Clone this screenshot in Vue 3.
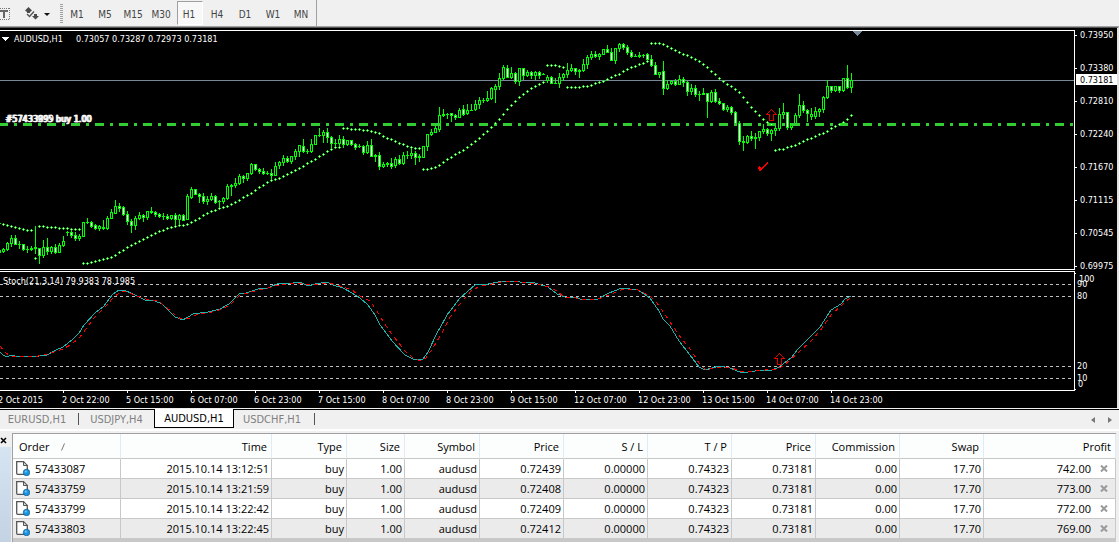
<script setup>
const STEP = 4
const timeframes = ['M1', 'M5', 'M15', 'M30', 'H1', 'H4', 'D1', 'W1', 'MN']
const activeFrame = 'H1'

// Each bar: high, low, body top, body bottom, and 1 when the close is below the open.
const bars = `249 253 250 252 0;248 252 249 251 0;242 250 243 249 0;235 246 238 243 0;235 244 238 244 1;241 248 244 244 0;244 250 244 249 1;246 252 249 249 0;246 250 248 249 0;226 253 247 248 0;248 263 248 255 1
240 257 247 255 0;238 254 247 251 1;246 253 247 251 0;244 253 247 252 1;243 252 245 252 0;236 246 241 245 0;231 235 232 232 0;230 237 232 235 1;232 240 235 238 1;234 240 236 238 0
222 236 222 236 0;218 223 222 222 0;221 227 222 226 1;224 229 225 228 1;225 230 226 228 0;220 229 227 228 0;216 229 218 228 0;209 218 212 218 0;200 213 206 213 0;203 211 206 208 1
206 215 207 214 1;211 224 214 221 1;219 232 221 225 1;216 229 218 225 0;212 219 215 218 0;214 221 215 217 1;211 219 211 217 0;207 213 211 212 0;211 216 212 214 1;213 217 214 216 1
213 219 216 216 0;214 219 216 218 1;215 219 215 218 0;213 225 215 219 1;214 224 215 219 0;214 220 215 220 1;194 219 196 219 0;187 198 189 197 0;189 194 189 194 1;193 202 194 196 1
193 203 196 201 1;196 204 199 201 0;193 200 196 199 0;195 203 196 202 1;200 208 201 201 0;197 203 198 201 0;184 199 186 198 0;184 195 185 186 0;178 187 183 185 0;174 184 176 183 0
175 182 176 178 1;173 180 173 178 0;163 174 164 173 0;164 170 164 169 1;168 173 169 171 1;168 174 171 173 1;171 174 173 173 0;169 179 173 175 1;162 175 166 175 0;161 168 162 165 0
155 165 158 162 0;156 162 158 161 1;156 163 156 161 0;149 159 151 156 0;145 156 145 151 0;139 152 146 151 1;149 153 151 151 0;139 152 144 151 0;135 144 135 144 0;128 136 135 135 0
130 142 132 135 0;128 142 132 137 1;136 149 137 143 1;139 146 143 143 0;135 145 139 143 0;136 147 139 144 1;140 145 140 144 0;140 145 140 144 1;143 149 144 147 1;144 147 146 146 0
145 154 146 152 1;141 153 145 152 0;139 156 145 156 1;154 161 155 156 0;152 169 155 166 1;162 167 164 166 0;162 166 163 164 0;158 168 163 166 1;157 167 159 165 0;155 164 159 163 1
152 164 155 163 0;151 158 155 155 0;147 158 153 155 0;151 164 153 157 1;154 161 156 157 0;146 157 146 157 0;134 150 134 146 0;129 135 132 134 0;124 132 128 132 0;107 131 115 129 0
109 116 114 115 0;113 118 114 114 0;113 121 113 115 1;114 119 115 117 1;108 117 110 117 0;105 115 109 114 1;104 114 110 113 0;104 110 110 110 0;100 110 104 109 0;97 108 100 104 0
98 102 100 100 0;91 101 98 100 0;87 99 88 98 0;84 102 86 89 0;73 89 78 86 0;65 79 67 78 0;65 77 68 77 1;67 78 73 77 0;72 83 73 81 1;68 85 68 81 0
68 79 68 75 1;70 76 72 75 0;71 78 72 75 1;71 79 72 75 0;71 78 72 75 1;73 74 74 74 0;75 82 77 80 0;76 83 77 83 1;78 83 83 83 0;73 87 77 83 0
73 80 74 77 0;63 77 70 74 0;64 71 68 70 0;68 74 68 71 1;69 77 70 71 0;59 71 64 70 0;55 68 57 64 0;51 59 54 57 0;51 57 54 56 1;53 59 54 56 0
49 54 49 54 0;45 52 49 52 1;48 60 52 60 1;48 63 48 60 0;43 51 44 48 0;43 49 44 47 1;45 54 47 52 1;50 57 52 56 1;54 56 56 56 0;52 57 55 56 0
54 57 55 55 0;53 62 54 59 1;55 66 59 65 1;62 74 65 74 1;72 77 72 74 0;61 94 71 88 1;80 89 84 88 0;80 84 81 83 0;79 85 81 84 1;75 84 79 84 0
77 86 79 82 1;81 95 82 91 1;84 94 88 91 0;85 96 88 94 1;91 100 94 94 0;88 94 93 94 0;93 117 93 101 1;90 102 92 101 0;89 102 92 101 1;98 104 101 103 1
103 110 103 109 1;105 111 107 109 0;106 114 107 112 1;111 123 112 123 1;121 144 123 141 1;136 150 141 142 0;135 143 136 142 0;131 140 136 138 1;133 148 137 138 0;131 140 131 137 0
124 133 129 131 0;128 135 129 133 1;129 140 130 133 0;125 135 128 130 0;108 130 114 128 0;103 118 112 114 0;112 129 112 127 1;123 129 123 127 0;113 124 115 124 0;94 117 105 115 0
101 112 105 110 1;109 121 110 113 1;108 119 114 116 0;107 118 111 116 0;108 116 109 111 0;96 112 97 109 0;80 98 86 97 0;86 92 86 90 1;86 91 86 90 0;86 92 86 90 1
78 91 78 90 0;65 88 78 87 1;73 92 80 87 0`
  .split(/[;\n]/)
  .map((row, i) => {
    const [high, low, top, bottom, down] = row.trim().split(' ').map(Number)
    return { x: (i - 1) * STEP + 3, high, low, top, bottom, down: down === 1 }
  })

// Parabolic SAR, one value per bar.
const sar = `223 224 225 226 227 228 229 230 230 258 226 226 227 227 227 228 228 228 229 229 229
263 263 262 261 260 259 258 257 255 252 250 247 245 243 241 239 237 235 233 231 230 228 227 226 225 225 224 222 220 218 215 213 211 210 208
207 206 204 202 200 197 195 193 190 187 185 182 180 179 178 176 174 172 170 168 166 163 161 159 156 154 151 149 147 147
128 128 129 129 129 130 130 131 132 133 136 138 139 141 143 144 146 147 148 148
169 169 168 167 165 162 159 157 154 152 150 147 144 141 138 134 131 127 123 119 114 109 105 101 97 94 91 88 86 84 82
65 65 65 66 67 87 87 87 87 86 86 85 83 82 81 79 77 75 74 71 69 67 66 64 63 61
43 43 43 44 46 48 50 52 54 55 57 59 61 64 67 71 74 78 81 84 86 89 92 97 102 107 111 115 119 122 124
150 149 149 147 146 145 143 141 139 138 136 134 133 131 128 126 124 122 119 115`
  .trim()
  .split(/\s+/)
  .map((y, i) => ({ x: (i - 1) * STEP + 3, y: Number(y) }))

const mainLine =
  '0,352 3,355 7,357 11,355 15,356 23,357 39,356 47,355 56,350 63,347 73,339 79,333 84,325 95,313 104,306 113,294 119,290 124,290 133,294 145,300 155,301 162,304 175,317 183,320 193,314 208,312 220,309 229,304 240,293 246,293 258,289 268,288 279,283 286,284 300,282 308,286 315,284 327,282 333,285 343,288 352,293 360,298 368,305 375,315 380,325 392,341 405,355 415,360 423,359 428,352 437,333 440,328 447,315 460,298 475,285 488,284 503,281 520,282 535,283 548,287 557,294 565,297 575,297 583,300 598,299 609,293 622,288 638,290 650,298 659,311 663,319 670,326 679,341 690,355 699,367 705,370 719,366 730,368 742,373 755,371 760,370 770,371 779,367 784,363 791,358 798,349 820,327 831,310 841,304 845,299 851,296'
const signalLine =
  '0,346 5,352 10,356 20,356 32,357 44,355 54,352 63,349 72,344 79,338 86,329 95,317 105,307 113,298 119,293 125,291 137,296 149,300 158,301 166,307 175,315 181,319 190,318 198,314 212,312 222,309 230,305 240,295 248,293 258,290 268,288 279,285 288,284 300,283 309,285 320,284 330,283 340,286 352,290 360,296 370,301 377,311 384,323 394,337 405,351 413,358 421,361 426,358 433,348 442,333 450,317 460,304 471,291 480,286 492,284 505,281 520,282 537,284 549,287 557,291 564,297 576,298 586,300 598,299 609,295 623,289 638,290 650,296 657,303 664,313 672,325 681,338 691,350 699,363 706,370 717,367 730,367 741,372 755,371 765,370 776,369 783,366 790,360 798,353 810,342 820,331 831,315 842,305 851,297'

const levels = [284, 296, 366, 378]
const priceTicks = [
  ['0.73950', 35], ['0.73380', 68], ['0.72810', 101], ['0.72240', 134],
  ['0.71670', 167], ['0.71115', 200], ['0.70545', 233], ['0.69975', 266],
]
const levelLabels = [['100', 279, 8], ['90', 284, 6], ['80', 296, 6], ['20', 366, 6], ['10', 378, 6], ['0', 384, 7]]
const timeTicks = [
  '2 Oct 2015', '2 Oct 22:00', '5 Oct 15:00', '6 Oct 07:00', '6 Oct 23:00', '7 Oct 15:00', '8 Oct 07:00',
  '8 Oct 23:00', '9 Oct 15:00', '12 Oct 07:00', '12 Oct 23:00', '13 Oct 15:00', '14 Oct 07:00', '14 Oct 23:00',
].map((label, i) => ({ label, x: i * 64 - 1 }))

const charts = ['EURUSD,H1', 'USDJPY,H4', 'AUDUSD,H1', 'USDCHF,H1']
const activeChart = 'AUDUSD,H1'

const columns = ['Time', 'Type', 'Size', 'Symbol', 'Price', 'S / L', 'T / P', 'Price', 'Commission', 'Swap']
const orders = [
  ['57433087', '2015.10.14 13:12:51', '0.72439', '742.00'],
  ['57433759', '2015.10.14 13:21:59', '0.72408', '773.00'],
  ['57433799', '2015.10.14 13:22:42', '0.72409', '772.00'],
  ['57433803', '2015.10.14 13:22:45', '0.72412', '769.00'],
].map(([id, time, open, profit]) => ({
  id,
  cells: [time, 'buy', '1.00', 'audusd', open, '0.00000', '0.74323', '0.73181', '0.00', '17.70'],
  profit,
}))
</script>

<template>
  <div class="terminal">
    <header class="toolbar">
      <button class="tool text-tool" type="button" aria-label="Text label">
        <svg width="10" height="14" viewBox="0 0 10 14" shape-rendering="crispEdges">
          <path d="M0 1.5H10M0 12.5H10" stroke="#777" stroke-dasharray="1 1" />
          <path d="M9.5 1V13" stroke="#777" stroke-dasharray="1 1" />
          <path d="M0 3H8V5H5V11H3V5H0Z" fill="#666" />
        </svg>
      </button>
      <button class="tool arrows-tool" type="button" aria-label="Arrows">
        <svg width="26" height="14" viewBox="0 0 26 14">
          <path d="M3.5 0 7 3.5 5 5V6H2V5L0 3.5Z" fill="#4a4a4a" />
          <path d="M2 7 4.500 9.500 9 4.500" fill="none" stroke="#555" stroke-width="1.400" />
          <path d="M9 7H12V9H14L10.500 12.500 7 9H9Z" fill="#4a4a4a" />
          <path d="M19 6H25L22 9Z" fill="#111" />
        </svg>
      </button>
      <span class="grip"></span>
      <nav class="frames">
        <button
          v-for="frame in timeframes"
          :key="frame"
          type="button"
          class="frame"
          :class="{ active: frame === activeFrame }"
        >{{ frame }}</button>
      </nav>
    </header>

    <main class="chart">
      <div class="row">
        <section class="plot price-plot">
          <svg class="canvas" width="100%" height="238" shape-rendering="crispEdges">
            <g transform="translate(0 -31)">
              <line class="bid" x1="0" x2="100%" y1="80.500" y2="80.500" />
              <g v-for="bar in bars" :key="bar.x" class="bar">
                <rect :x="bar.x" :y="bar.high" width="1" :height="bar.low - bar.high + 1" />
                <rect :x="bar.x - 1" :y="bar.top" width="3" :height="bar.bottom - bar.top + 1" />
                <rect
                  v-if="bar.bottom - bar.top > 1"
                  :class="bar.down ? 'fall' : 'rise'"
                  :x="bar.x"
                  :y="bar.top + 1"
                  width="1"
                  :height="bar.bottom - bar.top - 1"
                />
              </g>
              <line class="position" x1="-1" x2="100%" y1="124.500" y2="124.500" />
              <g v-for="dot in sar" :key="dot.x" class="bar">
                <rect :x="dot.x - 1" :y="dot.y" width="3" height="1" />
                <rect :x="dot.x" :y="dot.y - 1" width="1" height="3" />
                <rect class="fall" :x="dot.x" :y="dot.y" width="1" height="1" />
              </g>
              <path class="arrow" d="M771.500 109.500 776.500 114.500H773.500V120.500H769.500V114.500H766.500Z" />
              <path class="check" d="M758 167 760 166 761 168 768 162 768 163 761 171 759 171Z" />
              <path class="shift" d="M853 31H862L857.500 36Z" />
              <path class="caret" d="M2 37H9L5.500 41Z" />
              <text x="14" y="42">AUDUSD,H1</text>
              <text x="76" y="42">0.73057 0.73287 0.72973 0.73181</text>
              <g class="order-label">
                <text x="5" y="122">#57433995 buy 1.00</text>
                <text x="6" y="122">#57433899 buy 1.00</text>
              </g>
            </g>
          </svg>
        </section>
        <aside class="axis">
          <svg width="42" height="240" shape-rendering="crispEdges">
            <g transform="translate(0 -30)">
              <g v-for="[label, y] in priceTicks" :key="label">
                <rect class="tick" x="0" :y="y" width="2" height="1" />
                <text x="5" :y="y + 3">{{ label }}</text>
              </g>
              <rect class="tick" x="1" y="74" width="41" height="11" />
              <text class="current" x="5" y="83">0.73181</text>
            </g>
          </svg>
        </aside>
      </div>

      <div class="row">
        <section class="plot stoch-plot">
          <svg class="canvas" width="100%" height="118" shape-rendering="crispEdges">
            <g transform="translate(0 -272)">
              <line v-for="y in levels" :key="y" class="level" x1="0" x2="100%" :y1="y + 0.5" :y2="y + 0.5" />
              <polyline class="main-line" :points="mainLine" />
              <polyline class="signal-line" :points="signalLine" />
              <path class="arrow" d="M779.500 353.500 784.500 358.500H781.500V364.500H777.500V358.500H774.500Z" />
              <text x="3" y="284">Stoch(21,3,14) 79.9383 78.1985</text>
            </g>
          </svg>
        </section>
        <aside class="axis">
          <svg width="42" height="120" shape-rendering="crispEdges">
            <g transform="translate(0 -271)">
              <rect class="tick" x="0" y="273" width="1" height="1" />
              <rect class="tick" x="0" y="389" width="1" height="1" />
              <text v-for="[label, y, dx] in levelLabels" :key="label" :x="dx - 4" :y="y + 3">{{ label }}</text>
            </g>
          </svg>
        </aside>
      </div>

      <svg class="time-axis" width="100%" height="17" shape-rendering="crispEdges">
        <g v-for="tick in timeTicks" :key="tick.label">
          <rect class="tick" :x="tick.x" y="0" width="1" height="2" />
          <text :x="tick.x - 1" y="12">{{ tick.label }}</text>
        </g>
      </svg>
    </main>

    <nav class="tabs">
      <button
        v-for="name in charts"
        :key="name"
        type="button"
        class="tab"
        :class="{ active: name === activeChart }"
      >{{ name }}</button>
      <span class="scrollers">
        <button type="button" aria-label="Scroll tabs left">
          <svg width="4" height="6" viewBox="0 0 4 6"><path d="M4 0V6L0 3Z" fill="#777" /></svg>
        </button>
        <button type="button" aria-label="Scroll tabs right">
          <svg width="4" height="6" viewBox="0 0 4 6"><path d="M0 0V6L4 3Z" fill="#777" /></svg>
        </button>
      </span>
    </nav>

    <section class="orders">
      <div class="side">
        <button type="button" class="close" aria-label="Close terminal">
          <svg width="7" height="7" viewBox="0 0 7 7"><path d="M1 1 6 6M6 1 1 6" stroke="#000" stroke-width="1.600" /></svg>
        </button>
        <div class="strip"></div>
      </div>
      <div class="grid">
        <table>
          <colgroup>
            <col class="c-order" /><col class="c-time" /><col class="c-type" /><col class="c-size" /><col class="c-symbol" />
            <col class="c-num" /><col class="c-num" /><col class="c-num" /><col class="c-num" /><col class="c-num" /><col class="c-num" /><col />
          </colgroup>
          <thead>
            <tr>
              <th class="first" scope="col">Order
                <svg class="sort" width="12" height="8" viewBox="0 0 12 8"><path d="M.5 7.500 3.500.5" stroke="#777" fill="none" /></svg>
              </th>
              <th v-for="(title, i) in columns" :key="i" scope="col">{{ title }}</th>
              <th scope="col">Profit</th>
            </tr>
          </thead>
          <tbody>
            <tr v-for="order in orders" :key="order.id">
              <td class="first">
                <div class="order-cell">
                  <svg width="14" height="15" viewBox="0 0 14 15">
                    <path d="M.7.7H7.500L11.300 4.500V12.300Q11.300 13.300 10.300 13.300H1.700Q.7 13.300.7 12.300Z" fill="#fff" stroke="#555" stroke-width="1.300" />
                    <path d="M7.500.7V4.500H11.300Z" fill="#ddd" stroke="#555" />
                    <circle cx="10.500" cy="11.500" r="3.200" fill="#1c96e0" stroke="#0b5c98" stroke-width=".8" />
                    <circle cx="9.800" cy="10.600" r="1" fill="#7cc8f5" />
                  </svg>
                  {{ order.id }}
                </div>
              </td>
              <td v-for="(cell, i) in order.cells" :key="i">{{ cell }}</td>
              <td>
                <div class="profit-cell">
                  {{ order.profit }}
                  <button type="button" :aria-label="'Close order ' + order.id">
                    <svg width="8" height="7" viewBox="0 0 8 7"><path d="M1 .5 7 6.500M7 .5 1 6.500" stroke="#999" stroke-width="2" /></svg>
                  </button>
                </div>
              </td>
            </tr>
          </tbody>
        </table>
        <div class="summary"></div>
      </div>
    </section>
  </div>
</template>

<style>
body {
  background: #fff;
}
</style>

<style scoped>
.terminal {
  background: #f0f0f0;
  font-family: "DejaVu Sans Condensed", "DejaVu Sans", sans-serif;
  font-size: 9px;
  color: #000;
}
button {
  margin: 0;
  padding: 0;
  border: 0;
  background: none;
  font: inherit;
  color: inherit;
}
svg {
  display: block;
}

.toolbar {
  display: flex;
  align-items: stretch;
  height: 26px;
  border-bottom: 1px solid #a0a0a0;
}
.tool {
  display: flex;
  align-items: center;
  padding-top: 2px;
}
.text-tool {
  width: 25px;
}
.arrows-tool {
  width: 35px;
}
.grip {
  width: 3px;
  margin: 4px 1px 3px 0;
  background: repeating-linear-gradient(#a0a0a0 0 1px, #f0f0f0 1px 2px);
}
.frames {
  display: flex;
  padding: 1px 0;
  border-right: 1px solid #a0a0a0;
}
.frame {
  width: 28px;
  padding: 3px 2px 0 0;
  font-size: 10px;
  color: #444;
}
.frame.active {
  width: 26px;
  margin: 0 1px;
  border: 1px solid #a0a0a0;
  border-right-color: #fff;
  border-bottom-color: #fff;
  background: #f8f8f8;
}

.chart {
  padding-top: 2px;
  border-top: 1px solid #555;
  border-right: 2px solid #e3e3e3;
  background: #000;
}
.chart text {
  fill: #fff;
}
.order-label {
  stroke: #fff;
  stroke-width: 0.4;
}
.row {
  display: flex;
  margin-bottom: 1px;
}
.row + .row {
  margin-bottom: 0;
}
.plot {
  flex: 1;
  min-width: 0;
  overflow: hidden;
  border: 1px solid #fff;
  border-left: 0;
}
.axis {
  width: 42px;
}
.tick,
.caret {
  fill: #fff;
}
.chart .current {
  fill: #000;
}
.bar {
  fill: #0f0;
}
.rise {
  fill: #000;
}
.fall {
  fill: #fff;
}
.bid {
  stroke: #778899;
}
.shift {
  fill: #778899;
}
.position {
  stroke: #32cd32;
  stroke-width: 3;
  stroke-dasharray: 9 6 3 6;
}
.level {
  stroke: #c0c0c0;
  stroke-dasharray: 3 3;
}
.main-line {
  fill: none;
  stroke: #20b2aa;
}
.signal-line {
  fill: none;
  stroke: #f00;
  stroke-dasharray: 4 4;
}
.arrow {
  fill: none;
  stroke: #e00000;
}
.check {
  fill: #f00;
}

.tabs {
  display: flex;
  height: 20px;
  margin-top: 1px;
  border-bottom: 2px solid #fff;
  background: linear-gradient(#000 0 1px, #f0f0f0 1px);
  font-size: 11px;
  color: #808080;
}
.tab {
  width: 79px;
  height: 19px;
  padding: 1px 5px 0 0;
}
.tab:nth-child(2) {
  width: 75px;
  padding-right: 0;
}
.tab.active {
  width: 80px;
  padding: 1px 0 0;
  border: 1px solid #000;
  border-top: 0;
  background: #fff;
  color: #000;
}
.tab:nth-child(4) {
  width: 81px;
}
.tab:first-child,
.tab:nth-child(4) {
  background: linear-gradient(#555, #555) right 0 bottom 3px / 1px 12px no-repeat;
}
.scrollers {
  display: flex;
  align-items: center;
  gap: 13px;
  margin-left: auto;
  padding: 2px 7px 0 0;
}

.orders {
  display: flex;
  padding: 2px 3px 0 0;
  font-family: "Open Sans", "Noto Sans", sans-serif;
  font-size: 11px;
}
.side {
  display: flex;
  flex-direction: column;
  width: 12px;
}
.close {
  height: 14px;
}
.strip {
  flex: 1;
  width: 11px;
  background: linear-gradient(#d6e4f2, #c3d3e4);
}
.grid {
  flex: 1;
  min-width: 0;
  border-top: 1px solid #a0a0a0;
  border-left: 1px solid #a0a0a0;
}
table {
  width: 100%;
  table-layout: fixed;
  border-collapse: separate;
  border-spacing: 0;
}
th,
td {
  box-sizing: border-box;
  padding: 0 2px 0 0;
  border-right: 1px solid #c8c8c8;
  border-bottom: 1px solid #c8c8c8;
  text-align: right;
  font-weight: 400;
  white-space: nowrap;
  line-height: 19px;
}
th {
  height: 25px;
  padding-right: 4px;
  border-right-color: #e0ebf8;
  background: #fcfdfd;
}
td {
  height: 20px;
  background: #fff;
}
tbody tr:nth-child(even) td {
  background: #ebebeb;
}
.first {
  text-align: left;
}
th.first {
  padding-left: 6px;
}
.sort {
  display: inline-block;
  margin-left: 9px;
}
.order-cell {
  display: flex;
  align-items: center;
  gap: 5px;
  padding-left: 3px;
}
.profit-cell {
  display: flex;
  align-items: center;
  justify-content: flex-end;
  gap: 9px;
  padding-right: 5px;
}
.c-order { width: 108px; }
.c-time { width: 151px; }
.c-type { width: 75px; }
.c-size { width: 58px; }
.c-symbol { width: 75px; }
.c-num { width: 84px; }
.summary {
  height: 3px;
  background: #c8c8c8;
}
</style>
